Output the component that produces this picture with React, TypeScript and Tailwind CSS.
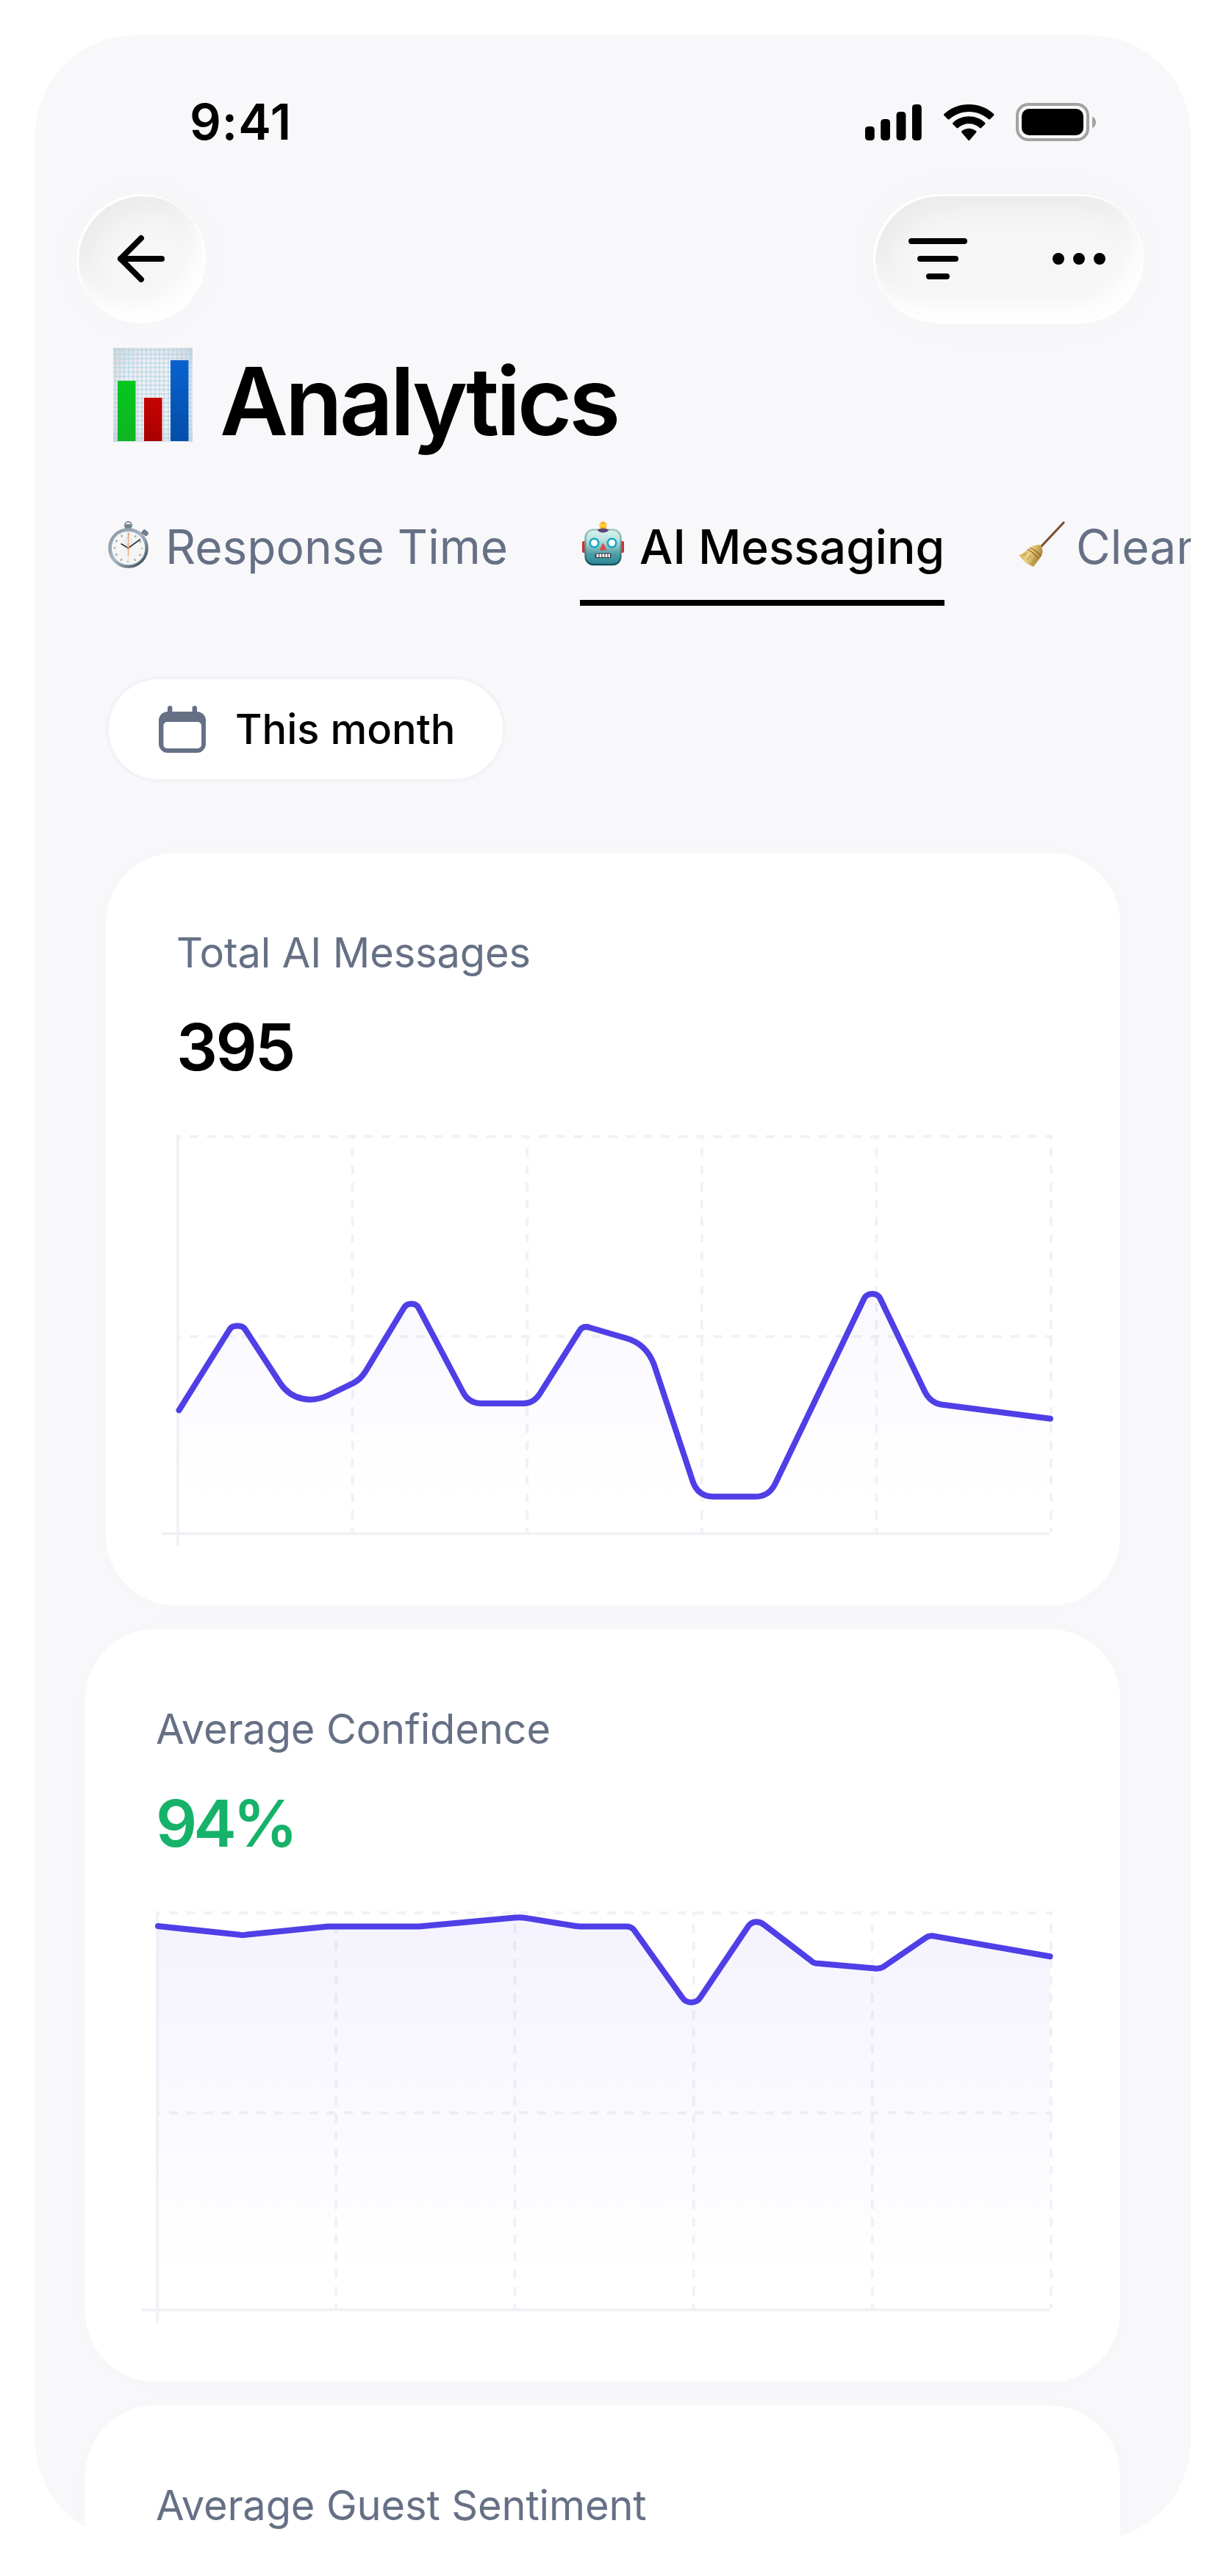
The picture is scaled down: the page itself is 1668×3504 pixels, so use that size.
import { ArrowLeft } from "lucide-react";
import type { ReactNode } from "react";

interface MdlChartParams {
  idgrad: string;
  widthx: number;
  dashes: number;
  linepx: string;
}

// Line chart data
const chtmsg: MdlChartParams = {
  idgrad: "grdmsg",
  widthx: 1188,
  dashes: 50,
  linepx:
    "M3.5 374.3L72 265C76 257.8 90 257.8 94 265L141.4 337.7C157 361 184 364.5 206.3 354L241.7 336.8Q250.5 332 257 322L309.6 235C314 227.8 325.5 227.8 329.5 235L389.6 349Q397.5 365 415.3 365H472Q486.5 365 495 351L548.6 266Q553 258.5 563 262L612.5 276.5Q639 284 649.7 311.8L703 472.5Q710.5 491.8 730.6 491.8H787.8Q807 491.8 815.5 472.5L935.7 222.3C940 213.8 953.5 213.8 957.5 222.3L1018 348.6Q1025.5 364 1040.4 366.5L1189 385.8",
};
const chtcfd: MdlChartParams = {
  idgrad: "grdcfd",
  widthx: 1216,
  dashes: 51,
  linepx:
    "M3 20L114 31.8Q118 32.6 122 31.8L234 20.5H358L488 8.6Q496 7.8 506 9.4L570 19.8Q574 20.5 579 20.5H640Q646.5 20.5 650.4 25L716 116.8C721.5 126 735.5 126 741 116.8L805.5 21C811 12.5 821 12.5 828.3 18.8L890.4 66.3Q894 70 898 70.5L978 77.5Q984 78.5 989.7 75.5L1048 35.5Q1052 32.5 1057 33.3L1216.6 61.2",
};

function UixIconvcSignal() {
  return (
    <svg width="78" height="52" viewBox="0 0 78 52">
      <rect x="0" y="32" width="12.8" height="19" rx="4.4" />
      <rect x="21.2" y="22" width="12.8" height="29" rx="4.4" />
      <rect x="42.6" y="12" width="12.8" height="39" rx="4.4" />
      <rect x="64" y="2" width="12.8" height="49" rx="4.4" />
    </svg>
  );
}

function UixIconvcWifixx() {
  return (
    <svg width="68.6" height="52" viewBox="0 -0.5 17.15 13">
      <path d="M8.57 2.47C11.06 2.47 13.45 3.39 15.25 5.04C15.39 5.17 15.61 5.17 15.74 5.04L17.04 3.77C17.1 3.71 17.14 3.62 17.14 3.52C17.14 3.43 17.1 3.34 17.03 3.27C12.3 -1.09 4.84 -1.09 .11 3.27C.04 3.34 0 3.43 0 3.52C0 3.62 .04 3.71 .1 3.77L1.4 5.04C1.54 5.17 1.75 5.17 1.89 5.04C3.69 3.39 6.08 2.47 8.57 2.47Z" />
      <path d="M8.57 6.58C9.93 6.58 11.25 7.08 12.25 8C12.39 8.13 12.6 8.13 12.74 8L14.03 6.73C14.1 6.66 14.14 6.57 14.14 6.48C14.14 6.38 14.1 6.29 14.03 6.22C10.95 3.36 6.2 3.36 3.11 6.22C3.04 6.29 3 6.38 3 6.48C3 6.57 3.04 6.66 3.11 6.73L4.4 8C4.54 8.13 4.75 8.13 4.89 8C5.9 7.08 7.21 6.58 8.57 6.58Z" />
      <path d="M11.15 9.33C11.15 9.43 11.11 9.52 11.04 9.59L8.8 12.2C8.68 12.34 8.46 12.34 8.34 12.2L6.1 9.59C6.03 9.52 5.99 9.43 5.99 9.33C5.99 9.23 6.03 9.14 6.11 9.08C7.53 7.87 9.61 7.87 11.03 9.08C11.11 9.14 11.15 9.23 11.15 9.33Z" />
    </svg>
  );
}

function UixIconvcBattry() {
  return (
    <svg width="110" height="52" viewBox="0 0 110 52">
      <rect x="2" y="2" width="96" height="48" rx="15" fill="none" stroke="#a2a2a3" strokeWidth="4" />
      <rect x="8" y="8" width="84" height="36" rx="10" />
      <path d="M104 18.5C107 19.8 109 22.6 109 26.3C109 30 107 33 104 34.5Z" fill="#a2a2a3" />
    </svg>
  );
}

function UixIconvcFilter() {
  return (
    <svg width="96" height="96" viewBox="0 0 24 24" fill="none" stroke="black" strokeWidth="2" strokeLinecap="round">
      <path d="M3 6H21M6 12H18M9 18H15" />
    </svg>
  );
}

function UixIconvcCalndr() {
  return (
    <svg width="64" height="64" viewBox="0 0 64 64" fill="#667085">
      <rect x="12" y="0" width="6.4" height="16" rx="3.2" />
      <rect x="45.6" y="0" width="6.4" height="16" rx="3.2" />
      <path
        fillRule="evenodd"
        d="M12 8H52A12 12 0 0 1 64 20V52A12 12 0 0 1 52 64H12A12 12 0 0 1 0 52V20A12 12 0 0 1 12 8ZM11.4 22A5 5 0 0 0 6.4 27V53A5 5 0 0 0 11.4 58H53A5 5 0 0 0 58 53V27A5 5 0 0 0 53 22Z"
      />
    </svg>
  );
}

function UixEmojixCharts() {
  return (
    <svg width="108" height="128" viewBox="0 0 108 128">
      <defs>
        <pattern id="ptngrd" width="6" height="6" patternUnits="userSpaceOnUse">
          <path d="M0 3H6M3 0V6" stroke="#a9d3ea" strokeWidth="1" />
        </pattern>
        <radialGradient id="grdppr" cx="0.5" cy="0.5" r="0.75">
          <stop offset="0.5" stopColor="#efeff1" />
          <stop offset="1" stopColor="#cdd0d5" />
        </radialGradient>
        <linearGradient id="grdgrn" x2="0" y2="1">
          <stop stopColor="#05c71f" />
          <stop offset="1" stopColor="#0fb521" />
        </linearGradient>
        <linearGradient id="grdred" x2="0" y2="1">
          <stop stopColor="#c60404" />
          <stop offset="1" stopColor="#a80000" />
        </linearGradient>
        <linearGradient id="grdblu" x2="0" y2="1">
          <stop stopColor="#0a62d0" />
          <stop offset="1" stopColor="#034da8" />
        </linearGradient>
      </defs>
      <rect width="108" height="128" fill="url(#grdppr)" />
      <rect width="108" height="128" fill="url(#ptngrd)" />
      <rect x="6" y="45" width="24.5" height="82" fill="url(#grdgrn)" />
      <rect x="42" y="68" width="24.5" height="59" fill="url(#grdred)" />
      <rect x="78" y="17" width="24.5" height="110" fill="url(#grdblu)" />
    </svg>
  );
}

function UixEmojixStopwt() {
  return (
    <svg width="60" height="64" viewBox="0 0 60 64">
      <defs>
        <linearGradient id="grdrim" x2="1" y2="1">
          <stop stopColor="#8b9099" />
          <stop offset="0.5" stopColor="#a9b4c2" />
          <stop offset="1" stopColor="#2f343c" />
        </linearGradient>
      </defs>
      <circle cx="27.5" cy="5.5" r="4.6" fill="none" stroke="#7d848c" strokeWidth="1.8" />
      <rect x="23.5" y="4" width="8" height="7.5" rx="1.5" fill="#708290" />
      <path d="M45 18.5L49 14" stroke="#5d7182" strokeWidth="4" />
      <rect x="46" y="12" width="9" height="6.5" rx="2.5" transform="rotate(42 50 15.5)" fill="#6c7f90" />
      <circle cx="27.5" cy="36.5" r="25.5" fill="#f5f5f4" stroke="url(#grdrim)" strokeWidth="3.6" />
      <circle cx="27.5" cy="36.5" r="23.2" fill="none" stroke="#6f9cc4" strokeWidth="1" />
      <circle
        cx="27.5"
        cy="36.5"
        r="18.5"
        fill="none"
        stroke="#a9a9a9"
        strokeWidth="3"
        strokeDasharray="2.2 7.487"
        strokeDashoffset="1.1"
      />
      <circle cx="27.5" cy="27" r="4.5" fill="none" stroke="#d2d2d2" strokeWidth="1.4" strokeDasharray="2 1.5" />
      <path d="M27.5 15V47" stroke="#f0a57a" strokeWidth="1.6" />
      <path d="M27.5 47V56" stroke="#f8d9c6" strokeWidth="1.2" />
      <path d="M17.5 30.5L27.5 36.5L44 24.5" fill="none" stroke="#26323c" strokeWidth="1.6" />
      <circle cx="27.5" cy="36.5" r="1.8" fill="#e08c5c" />
    </svg>
  );
}

function UixEmojixRobotx() {
  return (
    <svg width="60" height="64" viewBox="0 0 60 64">
      <defs>
        <linearGradient id="grdbot" x2="0" y2="1">
          <stop stopColor="#d9f3ee" />
          <stop offset="0.3" stopColor="#b9e2dd" />
          <stop offset="0.7" stopColor="#4d9ea6" />
          <stop offset="1" stopColor="#2b8798" />
        </linearGradient>
        <linearGradient id="grdrbt" x2="0" y2="1">
          <stop stopColor="#a5c8c0" />
          <stop offset="0.5" stopColor="#5f9a98" />
          <stop offset="1" stopColor="#14505c" />
        </linearGradient>
        <linearGradient id="grdamp" x2="0" y2="1">
          <stop stopColor="#ff9c0a" />
          <stop offset="0.5" stopColor="#ffd84a" />
          <stop offset="1" stopColor="#ff8a00" />
        </linearGradient>
      </defs>
      <rect x="0" y="27" width="8" height="16" rx="2" fill="#c9303a" />
      <rect x="49" y="27" width="8" height="16" rx="2" fill="#c9303a" />
      <rect x="4.5" y="11.500" width="48" height="47.500" rx="11" fill="url(#grdbot)" stroke="url(#grdrbt)" strokeWidth="2.4" />
      <circle cx="28.5" cy="5.8" r="5.2" fill="url(#grdamp)" />
      <path d="M20.5 11.5Q28.5 8 36.500 11.500Q34 15.500 28.500 15.500Q23 15.500 20.500 11.500Z" fill="#5b4678" />
      <circle cx="16.5" cy="29.5" r="5.8" fill="#fff" stroke="#14a5c6" strokeWidth="2.4" />
      <circle cx="40.5" cy="29.5" r="5.8" fill="#fff" stroke="#14a5c6" strokeWidth="2.4" />
      <path d="M28.5 30.500L32.500 39H24.500Z" fill="#e2474a" stroke="#e2474a" strokeWidth="1.2" strokeLinejoin="round" />
      <rect x="17.500" y="43.5" width="22" height="6.5" rx="2.500" fill="#3a2f33" />
      <path d="M19.5 46.700H38" stroke="#fff" strokeWidth="4.4" strokeDasharray="2.900 1.1" />
    </svg>
  );
}

function UixEmojixBrooms() {
  return (
    <svg width="64" height="64" viewBox="0 0 64 64">
      <defs>
        <linearGradient id="grdbrm" x2="1" y2="0.4">
          <stop stopColor="#c9a64c" />
          <stop offset="0.5" stopColor="#ecd283" />
          <stop offset="1" stopColor="#a88636" />
        </linearGradient>
      </defs>
      <path d="M61 2L30 35" stroke="#7b4f33" strokeWidth="3.2" strokeLinecap="round" />
      <path d="M28 32Q31 32 31.5 36Q34 44 29 50L20 62Q8 58 0.5 46Q5 45 11 39Q18 32 28 32Z" fill="url(#grdbrm)" />
      <path d="M12 38.5Q19 41 27 51M15.5 36Q23 39 30 47.5" fill="none" stroke="#8d5a2c" strokeWidth="1.2" />
      <path d="M6 47L11 43M11 53L17 46M17 58L22 51" stroke="#9b7a30" strokeWidth="0.9" />
    </svg>
  );
}

function UixTabbarButton({ emojix, labelx, active }: { emojix: ReactNode; labelx: string; active?: boolean }) {
  return (
    <div
      className={`flex h-[128px] shrink-0 items-start border-b-8 text-[64px] leading-[96px] whitespace-nowrap ${active ? "border-black font-medium text-black" : "border-transparent text-[#667085]"}`}
    >
      <div className="mt-[13px] w-[81px] pl-[3px]">{emojix}</div>
      <div>{labelx}</div>
    </div>
  );
}

function UixChartxLinear({ idgrad, widthx, dashes, linepx }: MdlChartParams) {
  const period = widthx / dashes;
  const perver = 540 / 23;
  return (
    <svg width={widthx} height="560" viewBox={`0 0 ${widthx} 560`} className="mt-14 block overflow-visible">
      <defs>
        <linearGradient id={idgrad} gradientUnits="userSpaceOnUse" x1="0" y1="0" x2="0" y2="540">
          <stop stopColor="#4f3fe6" stopOpacity="0.062" />
          <stop offset="0.5" stopColor="#4f3fe6" stopOpacity="0.03" />
          <stop offset="0.85" stopColor="#4f3fe6" stopOpacity="0.003" />
          <stop offset="1" stopColor="#4f3fe6" stopOpacity="0" />
        </linearGradient>
      </defs>
      <g stroke="#f1f2f5" strokeWidth="4">
        {[2, 274].map((y) => (
          <path key={y} d={`M0 ${y}H${widthx + 4}`} strokeDasharray={`12 ${period - 12}`} strokeDashoffset="6" />
        ))}
        {[1, 2, 3, 4, 5].map((n) => (
          <path
            key={n}
            d={`M${(widthx / 5) * n + 2} 0V540`}
            strokeDasharray={`12 ${perver - 12}`}
            strokeDashoffset="6"
          />
        ))}
        <path d={`M2 0V560M-20 542H${widthx}`} />
      </g>
      <path d={`${linepx}V540H2Z`} fill={`url(#${idgrad})`} />
      <path d={linepx} fill="none" stroke="#4f3fe6" strokeWidth="8" strokeLinecap="round" strokeLinejoin="round" />
    </svg>
  );
}

function UixCardxxMetric({
  labelx,
  valuex,
  colorx,
  margin,
  chartx,
}: {
  labelx: string;
  valuex: string;
  colorx: string;
  margin: string;
  chartx?: MdlChartParams;
}) {
  return (
    <div
      className={`${margin} mr-24 h-[1024px] shrink-0 rounded-[96px] bg-white p-24 shadow-[0_0_64px_rgba(16,24,40,0.012)]`}
    >
      <div className="text-[56px] leading-[80px] tracking-[-0.15px] whitespace-nowrap text-[#667085]">{labelx}</div>
      <div className={`mt-6 text-[88px] leading-[128px] font-semibold ${colorx}`}>{valuex}</div>
      {chartx && <UixChartxLinear {...chartx} />}
    </div>
  );
}

const glassx =
  "h-[176px] rounded-full bg-[#f6f6f6] shadow-[inset_3px_3px_1px_#fff,inset_-2px_0px_2px_#fff,inset_-12px_-24px_28px_rgba(255,255,255,0.95),inset_16px_24px_44px_-4px_rgba(0,0,0,0.05),0_0_80px_rgba(0,0,0,0.018)]";

export default function App() {
  return (
    <div className="h-[3504px] w-[1668px] bg-white p-12 font-['Inter',sans-serif] text-black">
      <div className="flex h-[3408px] w-[1572px] flex-col overflow-hidden rounded-[136px] bg-[#f8f8fb]">
        {/* Status bar */}
        <div className="flex h-[216px] shrink-0 justify-between pt-[73px] pr-[128px] pl-[210px]">
          <div className="text-[67px] leading-[90px] font-semibold tracking-[1px]">9:41</div>
          <div className="flex pt-[19px]">
            <UixIconvcSignal />
            <div className="pr-[29px] pl-[29px]">
              <UixIconvcWifixx />
            </div>
            <UixIconvcBattry />
          </div>
        </div>

        {/* Navigation */}
        <div className="flex shrink-0 justify-between pr-16 pl-14">
          <div className={`${glassx} flex w-[176px] items-center justify-center`}>
            <ArrowLeft size={96} strokeWidth={2} />
          </div>
          <div className={`${glassx} flex w-[368px] items-center justify-between px-10`}>
            <UixIconvcFilter />
            <svg width="96" height="96" viewBox="0 0 96 96">
              <circle cx="20" cy="48" r="8" />
              <circle cx="48" cy="48" r="8" />
              <circle cx="76" cy="48" r="8" />
            </svg>
          </div>
        </div>

        {/* Title */}
        <div className="mt-[26px] flex h-[160px] shrink-0 pl-[106px]">
          <div className="pt-[7px]">
            <UixEmojixCharts />
          </div>
          <h1 className="ml-[37px] text-[128px] leading-[160px] font-semibold tracking-[-4.4px]">Analytics</h1>
        </div>

        {/* Tabs */}
        <div className="mt-[70px] flex shrink-0 gap-[98px] overflow-hidden pl-24">
          <UixTabbarButton emojix={<UixEmojixStopwt />} labelx="Response Time" />
          <UixTabbarButton emojix={<UixEmojixRobotx />} labelx="AI Messaging" active />
          <UixTabbarButton emojix={<UixEmojixBrooms />} labelx="Cleaning" />
        </div>

        {/* Period */}
        <div className="mt-24 ml-24 flex h-[144px] w-[544px] shrink-0 items-center gap-10 rounded-full border-4 border-[#f2f3f6] bg-white pl-[68px]">
          <UixIconvcCalndr />
          <div className="text-[56px] leading-[80px] font-medium whitespace-nowrap">This month</div>
        </div>

        {/* Cards */}
        <div className="mt-24 flex flex-col gap-8">
          <UixCardxxMetric
            labelx="Total AI Messages"
            valuex="395"
            colorx="tracking-[-2.6px] text-black"
            margin="ml-24"
            chartx={chtmsg}
          />
          <UixCardxxMetric
            labelx="Average Confidence"
            valuex="94%"
            colorx="tracking-[-5px] text-[#17b26a]"
            margin="ml-[68px]"
            chartx={chtcfd}
          />
          <UixCardxxMetric labelx="Average Guest Sentiment" valuex="" colorx="text-black" margin="ml-[68px]" />
        </div>
      </div>
    </div>
  );
}
